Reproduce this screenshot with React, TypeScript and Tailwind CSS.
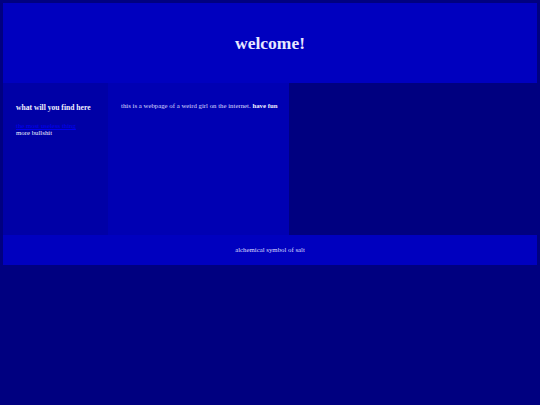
export default function App() {
  return (
    <div
      className="min-h-[405px] bg-[#000080] p-[3px] text-[#dcdcff]"
      style={{ fontFamily: '"Liberation Serif", "Times New Roman", serif' }}
    >
      {/* Header */}
      <header className="h-[80px] bg-[#0000bf] flex items-center justify-center pt-[2px]">
        <h1 className="text-[17.5px] font-bold text-[#e8e8ff] leading-none">welcome!</h1>
      </header>

      {/* Three columns */}
      <div className="flex h-[152px]">
        <aside className="w-[105px] bg-[#0000a6] pl-[13px] pt-[20px]">
          <h2 className="text-[7.6px] font-bold text-[#f0f0ff] leading-[10px]">what will you find here</h2>
          <div className="mt-[9px] text-[6.8px] leading-[7px]">
            <a href="#" className="block text-[#0000ee] underline">the most useless thing</a>
            <p className="text-[#f0f0ff]">more bullshit</p>
          </div>
        </aside>

        <main className="w-[181px] bg-[#0000b3] pl-[13px] pt-[19px]">
          <p className="text-[6.8px] leading-[8px] whitespace-nowrap">
            this is a webpage of a weird girl on the internet. <b className="text-[#f0f0ff]">have fun</b>
          </p>
        </main>

        <section className="flex-1 bg-[#000080]" />
      </div>

      {/* Footer */}
      <footer className="h-[30px] bg-[#0000bf] flex items-center justify-center">
        <p className="text-[6.8px] leading-none">alchemical symbol of salt</p>
      </footer>
    </div>
  );
}
